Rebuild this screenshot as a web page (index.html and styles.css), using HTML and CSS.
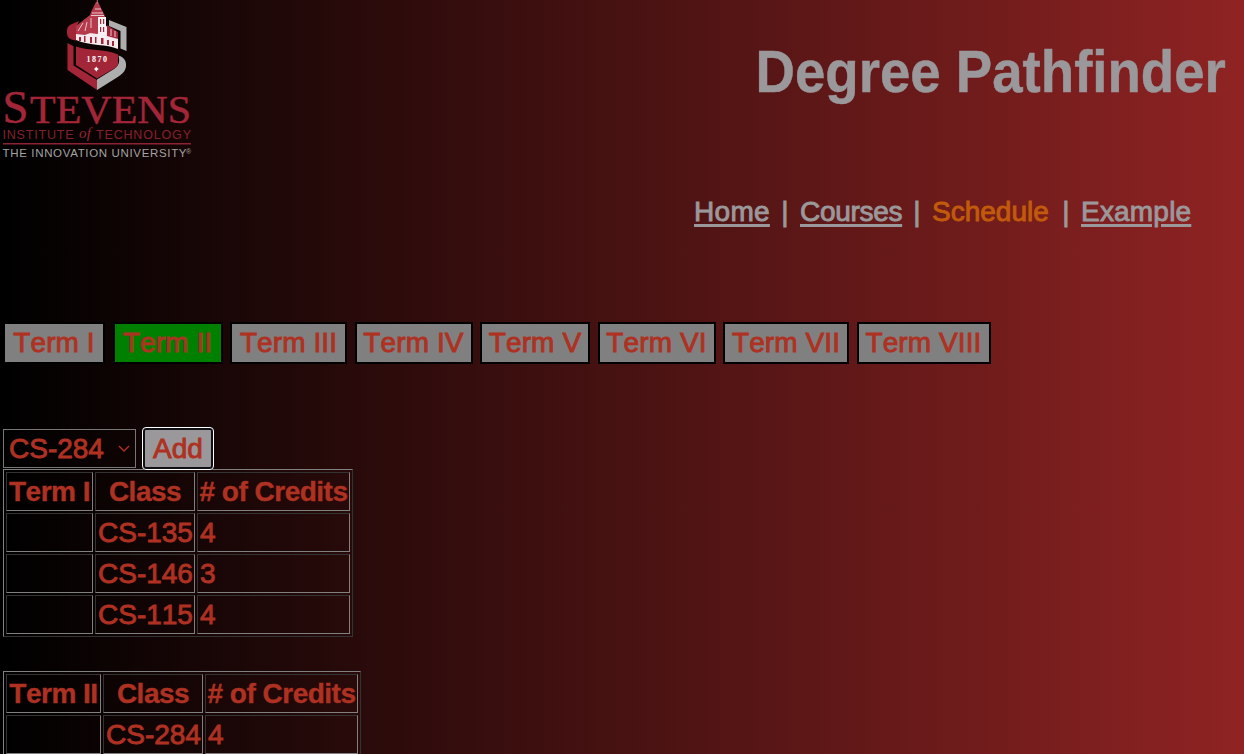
FILE: index.html
```html
<!DOCTYPE html>
<html lang="en">
<head>
<meta charset="utf-8">
<title>Degree Pathfinder</title>
<link rel="stylesheet" href="styles.css">
</head>
<body>
<header class="header">
  <svg class="logo" viewBox="0 0 195 160" role="img" aria-label="Stevens Institute of Technology">
    <path fill="#aeaeae" d="M109 20l17.500 7v24l-6-2.400V31L109 26z"/>
    <path fill="#aeaeae" d="M118.500 55.500c6 2 8 5.500 7.500 11-.8 5-3.500 7.500-9 11L97 90V79.500l17-10.500c5-3.500 6-7 4.500-13.500z"/>
    <path fill="#a32638" d="M79 21l-7 3c-4.500 2-5 4-5 9 0 5 4 7 9 7.500V28z"/>
    <path fill="#a32638" d="M67.500 43l6 3.200v19.300L97 80v10L67.500 70z"/>
    <path fill="#a32638" d="M76 46.500c14 5 27 1.500 42 8V64c0 1.500-1 2.500-3 4L97 78.500 76 65z"/>
    <path fill="#f4e9ed" d="M76 34l15-1 16-7 11 8v15c-11-5-28-3-42-9z"/>
    <path fill="#b43a4c" d="M76 26l14-11 1-3 5-10h2l5 10 2 4v15l-8 3-7-1-5 2-9-1z"/>
    <path fill="#a32638" d="M107 25l11 7v7l-11-3z"/>
    <path fill="none" stroke="#e7c8ce" stroke-width="1" d="M92 13h11M91 15.500h13M95 9h6M83 23l-5 8M87 22l-2 9M91 18v10M111 29v7M115 31v6"/>
    <path fill="#f8f0f2" d="M98 17h8v23h-8z"/>
    <path fill="#a32638" d="M100 19h1.200v5H100zM103 19h1.200v5H103zM100 27h1.200v5H100zM103 27h1.200v5H103zM79 37h2v4h-2zM84 36h1.500v6H84zM90 37h2v6h-2zM95 37h1.500v6H95zM101 38h2.500v6H101zM107 40h2v5h-2zM112 41h2v5h-2z"/>
    <path stroke="#c26978" d="M97.300 0v4"/>
    <text class="logo-year" x="86.500" y="62" textLength="20.500">1870</text>
    <path fill="#fff" d="M96.300 66.500l1 1.500 1.500 1-1.500 1-1 1.700-1-1.700-1.500-1 1.500-1z"/>
    <text class="logo-name logo-initial" x="2.500" y="123" textLength="26" lengthAdjust="spacingAndGlyphs">S</text>
    <text class="logo-name" x="30" y="123" textLength="161" lengthAdjust="spacingAndGlyphs">TEVENS</text>
    <text class="logo-sub" x="2.500" y="138.500" textLength="71">INSTITUTE</text>
    <text class="logo-of" x="79" y="138" textLength="12">of</text>
    <text class="logo-sub" x="96" y="138.500" textLength="95">TECHNOLOGY</text>
    <path fill="#8b2332" d="M3 142.900h188v1.500H3z"/>
    <text class="logo-tag" x="2.500" y="157" textLength="184">THE INNOVATION UNIVERSITY</text>
    <text class="logo-reg" x="186" y="154">®</text>
  </svg>
  <h1 class="title">Degree Pathfinder</h1>
</header>
<nav class="nav">
  <a class="link home" href="#">Home</a><span class="bar">|</span><a class="link courses" href="#">Courses</a><span class="bar">|</span><span class="current">Schedule</span><span class="bar">|</span><a class="link example" href="#">Example</a>
</nav>
<div class="terms">
  <div class="term t1">Term I</div>
  <div class="term t2 active">Term II</div>
  <div class="term t3">Term III</div>
  <div class="term t4">Term IV</div>
  <div class="term t5">Term V</div>
  <div class="term t6">Term VI</div>
  <div class="term t7">Term VII</div>
  <div class="term t8">Term VIII</div>
</div>
<div class="picker">
  <div class="select"><span>CS-284</span><svg class="chevron" viewBox="0 0 12 8"><path d="M1 1l5 5 5-5" fill="none" stroke="#b13021" stroke-width="1.400"/></svg></div>
  <button class="add">Add</button>
</div>
<table class="schedule first">
  <tr><th class="c-term">Term I</th><th class="c-class">Class</th><th class="c-credits">#&nbsp;of Credits</th></tr>
  <tr><td></td><td>CS-135</td><td>4</td></tr>
  <tr><td></td><td>CS-146</td><td>3</td></tr>
  <tr><td></td><td>CS-115</td><td>4</td></tr>
</table>
<table class="schedule second">
  <tr><th class="c-term">Term II</th><th class="c-class">Class</th><th class="c-credits">#&nbsp;of Credits</th></tr>
  <tr><td></td><td>CS-284</td><td>4</td></tr>
</table>
</body>
</html>
```
FILE: styles.css
```css
* { box-sizing: border-box; }
html { height: 100%; overflow: hidden; }
body {
  margin: 0;
  height: 754px;
  overflow: hidden;
  background: linear-gradient(to right, #000, #8f2323);
  color: #ae3122;
  font-family: "Liberation Sans", Arial, sans-serif;
  font-size: 28px;
  line-height: 37px;
  font-kerning: none;
  -webkit-text-stroke: 0.9px currentColor;
}
.header { display: flex; justify-content: space-between; height: 160px; padding-right: 18px; }
.logo { width: 195px; height: 160px; -webkit-text-stroke: 0; }
.logo-year { font: bold 8px "Liberation Serif", serif; fill: #fff; }
.logo-name { font: 39px "Liberation Serif", serif; fill: #a32638; stroke: #a32638; stroke-width: .5; }
.logo-initial { font-size: 46px; }
.logo-sub { font: 12.500px "Liberation Sans", sans-serif; fill: #85202e; }
.logo-of { font: italic 15px "Liberation Serif", serif; fill: #962537; }
.logo-tag { font: 11.500px "Liberation Sans", sans-serif; fill: #a2a2a2; }
.logo-reg { font: 7px "Liberation Sans", sans-serif; fill: #a2a2a2; }
.title {
  margin: 32px 0 0;
  color: #9b989b;
  font: bold 60px/80px "Liberation Sans", sans-serif;
  white-space: nowrap;
  transform: scaleX(.91);
  transform-origin: right;
  -webkit-text-stroke: 0.5px currentColor;
}
.nav { display: flex; justify-content: flex-end; margin-top: 33px; padding-right: 52px; color: #9b989b; white-space: nowrap; }
.link { color: inherit; text-underline-offset: 3px; text-decoration-thickness: 3px; }
.home { width: 76px; letter-spacing: .3px; }
.courses { width: 102px; letter-spacing: -.3px; }
.current { width: 119px; color: #c15b0b; }
.example { width: 111px; letter-spacing: .2px; }
.bar { width: 30px; text-align: center; }
.terms { display: flex; gap: 7.5px; margin: 92px 0 0 3px; }
.term { height: 42px; border: 2px solid #000; background: #808080; text-align: center; white-space: nowrap; letter-spacing: .1px; line-height: 38px; }
.term.active { background: #008000; }
.t1 { width: 102px; }
.t2 { width: 110px; }
.t3 { width: 117px; }
.t4 { width: 118px; }
.t5 { width: 110px; }
.t6 { width: 118px; }
.t7 { width: 126px; }
.t8 { width: 134px; }
.picker { display: flex; gap: 6px; margin: 63px 0 0 3px; height: 42px; }
.select { display: flex; align-items: center; justify-content: space-between; width: 133px; height: 39px; margin-top: 2px; padding: 0 5px 0 5px; border: 1px solid #777; }
.chevron { width: 12px; height: 8px; }
.add { width: 72px; height: 43px; padding: 0; border: 3px solid #101014; outline: 1px solid #fff; outline-offset: -1px; border-radius: 4px; background: #9b989b; color: inherit; font: inherit; -webkit-text-stroke: inherit; }
.schedule { table-layout: fixed; border-collapse: separate; border-spacing: 2px; margin-left: 3px; border: 1px solid; border-color: #808080 #333 #333 #808080; }
.schedule th, .schedule td { height: 39px; padding: 0 2px; border: 1px solid; border-color: #333 #808080 #808080 #333; white-space: nowrap; }
.schedule th { padding: 0; letter-spacing: -.5px; -webkit-text-stroke: 0.4px currentColor; }
.first { width: 350px; margin-bottom: 34px; }
.second { width: 358px; }
.first .c-term { width: 87px; }
.second .c-term { width: 95px; }
.c-class { width: 100px; }
.c-credits { width: 153px; }
```
